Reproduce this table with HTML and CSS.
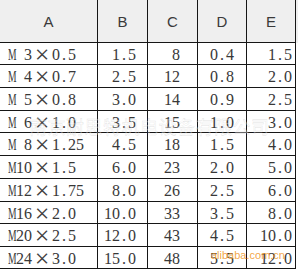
FILE: index.html
```html
<!DOCTYPE html>
<html>
<head>
<meta charset="utf-8">
<link rel="stylesheet" href="styles.css">
</head>
<body>
<div class="sheet">
  <div class="grid">
    <div class="h">A</div><div class="h">B</div><div class="h">C</div><div class="h">D</div><div class="h">E</div><div class="hx"></div>

    <div class="c a"><span class="m">M</span>3<span class="x">×</span>0<span class="p">.</span>5</div><div class="c b">1<span class="p">.</span>5</div><div class="c cc">8</div><div class="c d">0<span class="p">.</span>4</div><div class="c e">1<span class="p">.</span>5</div><div class="gap"></div>
    <div class="c a"><span class="m">M</span>4<span class="x">×</span>0<span class="p">.</span>7</div><div class="c b">2<span class="p">.</span>5</div><div class="c cc">12</div><div class="c d">0<span class="p">.</span>8</div><div class="c e">2<span class="p">.</span>0</div><div class="gap"></div>
    <div class="c a"><span class="m">M</span>5<span class="x">×</span>0<span class="p">.</span>8</div><div class="c b">3<span class="p">.</span>0</div><div class="c cc">14</div><div class="c d">0<span class="p">.</span>9</div><div class="c e">2<span class="p">.</span>5</div><div class="gap"></div>
    <div class="c a"><span class="m">M</span>6<span class="x">×</span>1<span class="p">.</span>0</div><div class="c b">3<span class="p">.</span>5</div><div class="c cc">15</div><div class="c d">1<span class="p">.</span>0</div><div class="c e">3<span class="p">.</span>0</div><div class="gap"></div>
    <div class="c a"><span class="m">M</span>8<span class="x">×</span>1<span class="p">.</span>25</div><div class="c b">4<span class="p">.</span>5</div><div class="c cc">18</div><div class="c d">1<span class="p">.</span>5</div><div class="c e">4<span class="p">.</span>0</div><div class="gap"></div>
    <div class="c a"><span class="m n">M</span>10<span class="x">×</span>1<span class="p">.</span>5</div><div class="c b">6<span class="p">.</span>0</div><div class="c cc">23</div><div class="c d">2<span class="p">.</span>0</div><div class="c e">5<span class="p">.</span>0</div><div class="gap"></div>
    <div class="c a"><span class="m n">M</span>12<span class="x">×</span>1<span class="p">.</span>75</div><div class="c b">8<span class="p">.</span>0</div><div class="c cc">26</div><div class="c d">2<span class="p">.</span>5</div><div class="c e">6<span class="p">.</span>0</div><div class="gap"></div>
    <div class="c a"><span class="m n">M</span>16<span class="x">×</span>2<span class="p">.</span>0</div><div class="c b">10<span class="p">.</span>0</div><div class="c cc">33</div><div class="c d">3<span class="p">.</span>5</div><div class="c e">8<span class="p">.</span>0</div><div class="gap"></div>
    <div class="c a"><span class="m n">M</span>20<span class="x">×</span>2<span class="p">.</span>5</div><div class="c b">12<span class="p">.</span>0</div><div class="c cc">43</div><div class="c d">4<span class="p">.</span>5</div><div class="c e">10<span class="p">.</span>0</div><div class="gap"></div>
    <div class="c a"><span class="m n">M</span>24<span class="x">×</span>3<span class="p">.</span>0</div><div class="c b">15<span class="p">.</span>0</div><div class="c cc">48</div><div class="c d">5<span class="p">.</span>5</div><div class="c e">12<span class="p">.</span>0</div><div class="gap"></div>
  </div>
  <div class="wm-cn">南京耐思特机电设备有限公司</div>
  <div class="wm-ali">alibaba.com.cn</div>
</div>
</body>
</html>
```

FILE: styles.css
```css
html, body {
  margin: 0;
  padding: 0;
  background: #ffffff;
}
.sheet {
  position: relative;
  width: 298px;
  height: 269px;
  overflow: hidden;
}
.grid {
  display: grid;
  grid-template-columns: 98px 50px 50px 49px 49px 2px;
  grid-template-rows: 43px 22px 23px 23px 22px 23px 23px 23px 22px 23px 22px;
}
.h, .c {
  box-sizing: border-box;
  border-right: 1px solid #161616;
  border-bottom: 1px solid #161616;
  display: flex;
  align-items: center;
}
.h {
  background: #efefef;
  justify-content: center;
  font-family: "Liberation Sans", Arial, sans-serif;
  font-size: 15px;
  color: #3a3a3a;
  padding-top: 1px;
}
.hx {
  background: #efefef;
}
.gap {
  background: #ffffff;
}
.c {
  font-family: "Liberation Serif", "Times New Roman", serif;
  font-size: 16px;
  line-height: 16px;
  color: #383838;
  white-space: nowrap;
  padding-top: 2px;
}
.a {
  justify-content: flex-start;
  padding-left: 8px;
}
.b {
  justify-content: flex-end;
  padding-right: 11px;
}
.cc {
  justify-content: flex-end;
  padding-right: 17px;
}
.d {
  justify-content: flex-end;
  padding-right: 12px;
}
.e {
  justify-content: flex-end;
  padding-right: 3px;
}
.m {
  display: inline-block;
  transform: scaleX(0.6);
  transform-origin: 0 50%;
  margin-right: 1.8px;
}
.m.n {
  margin-right: -6.2px;
}
.p {
  display: inline-block;
  width: 8px;
  text-align: center;
}
.x {
  display: inline-block;
  width: 20px;
  text-align: center;
  font-size: 26px;
  line-height: 16px;
  height: 16px;
  color: #404040;
}
.wm-cn {
  position: absolute;
  left: 29px;
  top: 114px;
  font-family: "Noto Sans CJK SC", sans-serif;
  font-size: 18px;
  letter-spacing: 0.5px;
  line-height: 24px;
  color: rgba(255, 255, 255, 0.35);
  -webkit-text-stroke: 0.4px rgba(150, 150, 150, 0.3);
  white-space: nowrap;
}
.wm-ali {
  position: absolute;
  left: 211px;
  top: 248px;
  font-family: "Liberation Sans", Arial, sans-serif;
  font-size: 11px;
  line-height: 14px;
  color: rgba(240, 150, 30, 0.85);
  white-space: nowrap;
}
```
